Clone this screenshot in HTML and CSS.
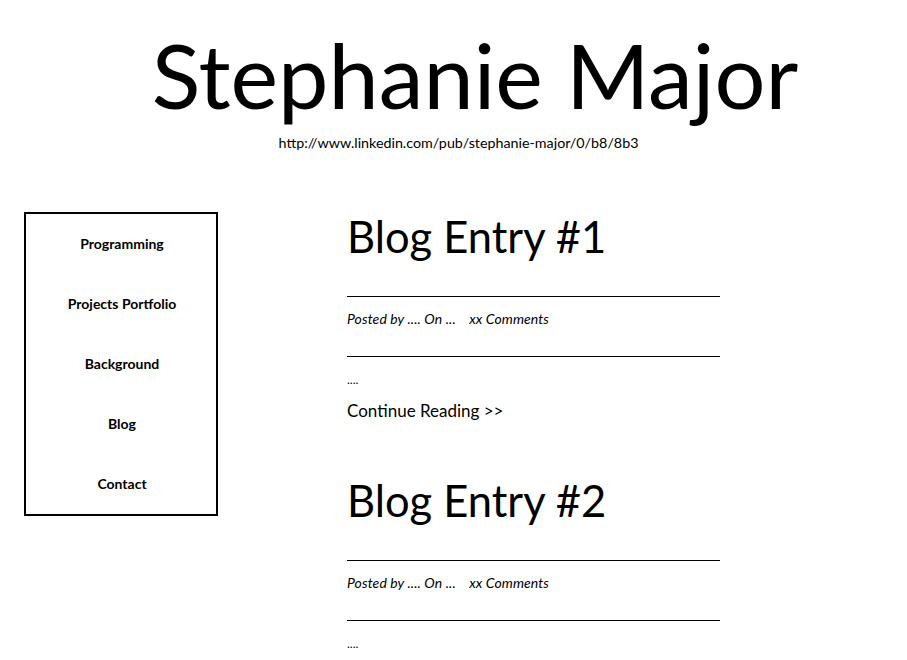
FILE: index.html
```html
<!DOCTYPE html>
<html lang="en">

<head>
  <meta charset="UTF-8" />
  <meta name="viewport" content="width=device-width, initial-scale=1.0" />
  <title>Stephanie Major</title>
  <link rel="stylesheet" href="styles.css">
</head>

<body>
  <header class="masthead">
    <h1 class="site-title">Stephanie Major</h1>
    <p class="site-link">http://www.linkedin.com/pub/stephanie-major/0/b8/8b3</p>
  </header>

  <div class="layout">
    <!-- side menu -->
    <nav class="side-nav">
      <a href="#">Programming</a>
      <a href="#">Projects Portfolio</a>
      <a href="#">Background</a>
      <a href="#">Blog</a>
      <a href="#">Contact</a>
    </nav>

    <main class="posts">
      <article class="post">
        <h2 class="post-title">Blog Entry #1</h2>
        <div class="post-meta">Posted by .... On ... <span class="post-comments">xx Comments</span></div>
        <p class="post-excerpt">....</p>
        <a class="read-more" href="#">Continue Reading &gt;&gt;</a>
      </article>

      <article class="post">
        <h2 class="post-title">Blog Entry #2</h2>
        <div class="post-meta">Posted by .... On ... <span class="post-comments">xx Comments</span></div>
        <p class="post-excerpt">....</p>
        <a class="read-more" href="#">Continue Reading &gt;&gt;</a>
      </article>
    </main>
  </div>
</body>

</html>
```

FILE: styles.css
```css
body {
  font-family: Lato, 'Open Sans', sans-serif;
  background: #fff;
  color: #000;
  margin: 0;
  padding: 24px 0 0;
}

a {
  color: #000;
  text-decoration: none;
}

.masthead {
  text-align: center;
}

.site-title {
  font-size: 90px;
  font-weight: 400;
  line-height: 100px;
  margin: 0;
  padding-left: 43px;
}

.site-link {
  font-size: 14.3px;
  line-height: 20px;
  margin: 9px 0 0;
  padding-left: 10px;
}

.layout {
  display: grid;
  grid-template-columns: 194px 373px;
  column-gap: 129px;
  margin-top: 55px;
  padding-left: 24px;
  align-items: start;
}

.side-nav {
  display: flex;
  flex-direction: column;
  margin-top: 4px;
  border: 2px solid #000;
}

.side-nav a {
  display: block;
  height: 60px;
  line-height: 60px;
  text-align: center;
  font-size: 14px;
  font-weight: 700;
  padding-left: 2px;
}

.post {
  height: 264px;
}

.post-title {
  font-size: 43.5px;
  font-weight: 400;
  line-height: 56px;
  margin: 0 0 32px;
}

.post-meta {
  border-top: 1px solid #000;
  border-bottom: 1px solid #000;
  padding: 14px 0 30px;
  font-size: 14px;
  font-style: italic;
  line-height: 15px;
  letter-spacing: 0.1px;
}

.post-comments {
  margin-left: 10px;
}

.post-excerpt {
  font-size: 12px;
  line-height: 20px;
  margin: 13px 0 0;
}

.read-more {
  display: block;
  margin-top: 9px;
  font-size: 17px;
  line-height: 24px;
}
```
